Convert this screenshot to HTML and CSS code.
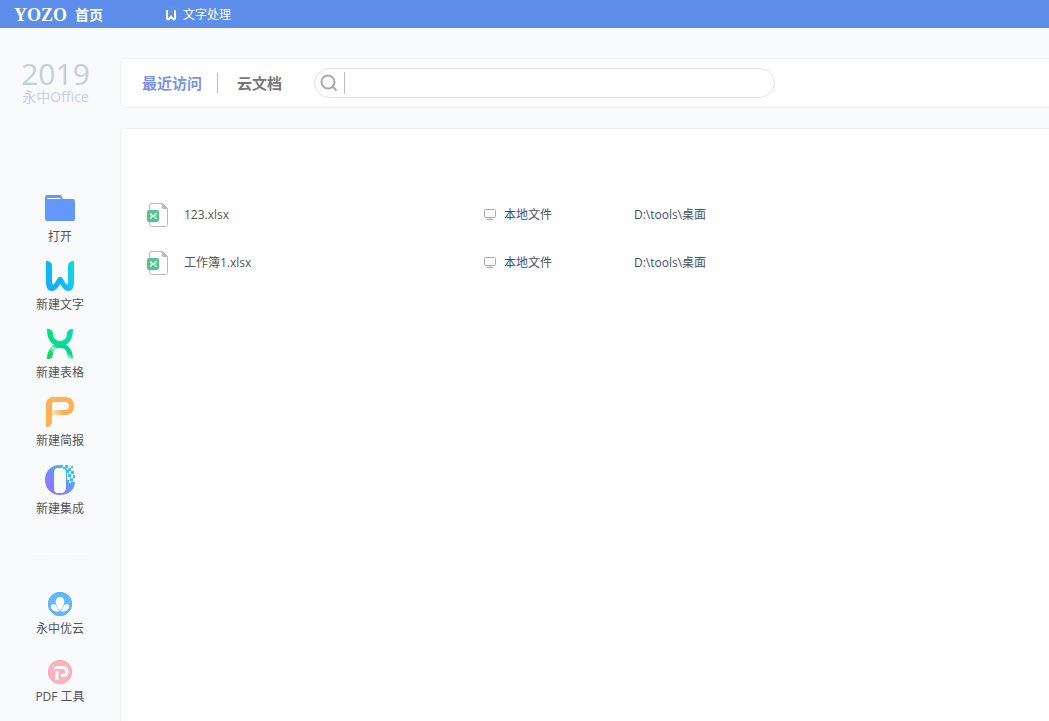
FILE: index.html
```html
<!DOCTYPE html>
<html lang="zh-CN">
<head>
<meta charset="utf-8">
<meta name="viewport" content="width=device-width, initial-scale=1">
<title>首页</title>
<link rel="stylesheet" href="styles.css">
</head>
<body>
<svg class="defs" width="0" height="0" aria-hidden="true">
  <symbol id="sheet-file" viewBox="0 0 22 24">
    <path d="M4 .5h11.500l5 5v16a2 2 0 0 1-2 2H4.500a2 2 0 0 1-2-2v-19a2 2 0 0 1 2-2z" fill="#fff" stroke="#b9babe"/>
    <path d="M15 0l6 6h-4.500a1.500 1.500 0 0 1-1.500-1.500z" fill="#b9babe"/>
    <rect y="7" width="12" height="12" rx="2" fill="#57c48f"/>
    <path d="M3.500 10c0 4 5.500 2 5.500 6M9 10c0 4-5.500 2-5.500 6" fill="none" stroke="#fff" stroke-width="1.300"/>
  </symbol>
  <symbol id="monitor" viewBox="0 0 12 12">
    <rect x=".5" y=".5" width="11" height="8" rx="1" fill="none" stroke="#a9a9a9"/>
    <path d="M6 8.500v2M3 10.500h6" fill="none" stroke="#a9a9a9"/>
  </symbol>
</svg>
<header class="titlebar">
  <button class="home-tab"><span class="brand">YOZO</span><span>首页</span></button>
  <button class="doc-tab">
    <svg width="16" height="16" viewBox="0 0 16 16" aria-hidden="true"><rect width="16" height="16" rx="2" fill="#5b93e2"/><path d="M4 3v8.500a1.200 1.200 0 0 0 2 .5l2-2.500 2 2.500a1.200 1.200 0 0 0 2-.5V3" fill="none" stroke="#fff" stroke-width="2"/></svg>
    <span>文字处理</span>
  </button>
</header>
<div class="layout">
  <aside class="sidebar">
    <div class="product"><span class="year">2019</span><span class="edition">永中Office</span></div>
    <nav class="actions">
      <button class="action">
        <svg width="32" height="32" viewBox="0 0 32 32" aria-hidden="true"><path d="M3 3h14l2 4h10a2 2 0 0 1 2 2v18a2 2 0 0 1-2 2H3a2 2 0 0 1-2-2V5a2 2 0 0 1 2-2z" fill="#6497fc"/><path d="M3 6.500h14" stroke="#fff"/></svg>
        <span>打开</span>
      </button>
      <button class="action">
        <svg width="32" height="32" viewBox="0 0 32 32" aria-hidden="true">
          <defs><linearGradient id="w-left" x1="0" y1="0" x2="0" y2="1"><stop stop-color="#0bbcf0"/><stop offset="1" stop-color="#11b0fa"/></linearGradient><linearGradient id="w-right" x1="0" y1="1" x2="1" y2="0"><stop stop-color="#12a8e8"/><stop offset=".5" stop-color="#16c7f0"/><stop offset="1" stop-color="#00e4d4"/></linearGradient></defs>
          <path d="M24 7c0-4 2-6 6-6v21c0 6-2 9-6 9-3 0-5-3-8-7l-3-4c2-4 4-4 6-1l3 5c1 1 2 0 2-2z" fill="url(#w-right)"/>
          <path d="M2 1c4 0 6 2 6 5v16c0 2 1 3 2 2l4-6c1-1 3-1 5 1-3 5-6 12-11 12-4 0-6-3-6-9z" fill="url(#w-left)"/>
        </svg>
        <span>新建文字</span>
      </button>
      <button class="action">
        <svg width="32" height="32" viewBox="0 0 32 32" aria-hidden="true">
          <defs><linearGradient id="x-top" x1="0" y1="0" x2="1" y2="0"><stop stop-color="#00de80"/><stop offset="1" stop-color="#00dfb0"/></linearGradient><linearGradient id="x-bottom" x1="0" y1="1" x2="1" y2="0"><stop stop-color="#08cf45"/><stop offset=".3" stop-color="#22db72"/><stop offset=".45" stop-color="#9af3c5"/><stop offset=".6" stop-color="#08d58d"/><stop offset="1" stop-color="#00d391"/></linearGradient></defs>
          <path d="M3 31c0-9 5-16 13-16s13 7 13 16c-4 0-6-2-6-5 0-4-3-6-7-6s-7 2-7 6c0 3-2 5-6 5z" fill="url(#x-bottom)"/>
          <path d="M3 1c4 0 6 2 6 5 0 4 3 7 7 7s7-3 7-7c0-3 2-5 6-5 0 10-4 17-13 17S3 11 3 1z" fill="url(#x-top)"/>
        </svg>
        <span>新建表格</span>
      </button>
      <button class="action">
        <svg width="32" height="32" viewBox="0 0 32 32" aria-hidden="true">
          <defs><linearGradient id="p-tail" x1="0" y1="0" x2="1" y2="0"><stop stop-color="#ffe3bd"/><stop offset=".7" stop-color="#ffb65c"/></linearGradient></defs>
          <path d="M8 14h14v5H8z" fill="url(#p-tail)"/>
          <path d="M2 31V9c0-5 3-8 8-8h11c6 0 9 4 9 9s-3 9-9 9h-4l2-5h2c2 0 4-1 4-4s-2-4-4-4H10c-2 0-2 1-2 3v16c0 4-2 6-6 6z" fill="#feb053"/>
        </svg>
        <span>新建简报</span>
      </button>
      <button class="action">
        <svg width="32" height="32" viewBox="0 0 32 32" aria-hidden="true">
          <defs><linearGradient id="o-ring" x1="0" y1="1" x2="1" y2="0"><stop stop-color="#a26aff"/><stop offset=".45" stop-color="#728aff"/><stop offset="1" stop-color="#31c8f5"/></linearGradient></defs>
          <path d="M14 1C6 2 1 8 1 16s6 15 15 15 15-6 15-13l-5-1-3-3V5l-3-1zM14 4h4c3 0 4 2 4 5v14c0 4-2 6-5 6h-3c-3 0-4-2-4-5V9c0-3 1-5 4-5z" fill-rule="evenodd" fill="url(#o-ring)"/>
          <path d="M15 1h4v2h-4zM21 1h3v3h-3zM19 3h3v2h-3zM24 4h3v3h-3zM27 2h2v2h-2zM22 6h3v3h-3zM27 7h3v3h-3zM24 10h3v3h-3zM29 11h2v3h-2zM26 14h3v3h-3z" fill="#2fcaf3"/>
          <path d="M23 14h2v2h-2zM25 17h2v2h-2z" fill="#f9fafc"/>
        </svg>
        <span>新建集成</span>
      </button>
    </nav>
    <hr class="divider">
    <nav class="services">
      <button class="action">
        <svg width="24" height="24" viewBox="0 0 24 24" aria-hidden="true"><circle cx="12" cy="12" r="12" fill="#64baf9"/><circle cx="12" cy="12" r="11.500" fill="none" stroke="#5ab0f0"/><path d="M12 19C9 15 7 11 8 8c1-4 7-4 8 0 1 3-1 7-4 11z" fill="#fff"/><path d="M11 19.500c-5 0-8-2-8-5 0-2 2-3 4-2 2 2 3 4 4 7zM13 19.500c5 0 8-2 8-5 0-2-2-3-4-2-2 2-3 4-4 7z" fill="#fff"/></svg>
        <span>永中优云</span>
      </button>
      <button class="action">
        <svg width="24" height="24" viewBox="0 0 24 24" aria-hidden="true"><circle cx="12" cy="12" r="12" fill="#ffb3bd"/><circle cx="12" cy="12" r="11.500" fill="none" stroke="#f8a9b5"/><path d="M9 20v-9M8 7.500h7a4 4 0 0 1 0 8h-2" fill="none" stroke="#fff" stroke-width="3"/><path d="M4 5h2v1H4zM6 7h2v2H6z" fill="#fff"/></svg>
        <span>PDF 工具</span>
      </button>
    </nav>
  </aside>
  <main class="content">
    <section class="toolbar">
      <button class="view-tab current">最近访问</button>
      <button class="view-tab">云文档</button>
      <label class="search">
        <svg width="18" height="18" viewBox="0 0 18 18" aria-hidden="true"><circle cx="8" cy="8" r="6.500" fill="none" stroke="#aaa" stroke-width="2"/><path d="M12.500 12.500l4 4" stroke="#aaa" stroke-width="2"/></svg>
        <input class="search-box" type="text" aria-label="搜索">
      </label>
    </section>
    <section class="files">
      <table class="file-table">
        <tbody>
          <tr>
            <td class="name"><div class="cell"><svg width="22" height="24" aria-hidden="true"><use href="#sheet-file"/></svg><span>123.xlsx</span></div></td>
            <td class="source"><div class="cell near"><svg width="12" height="12" aria-hidden="true"><use href="#monitor"/></svg><span>本地文件</span></div></td>
            <td>D:\tools\桌面</td>
          </tr>
          <tr>
            <td class="name"><div class="cell"><svg width="22" height="24" aria-hidden="true"><use href="#sheet-file"/></svg><span>工作簿1.xlsx</span></div></td>
            <td class="source"><div class="cell near"><svg width="12" height="12" aria-hidden="true"><use href="#monitor"/></svg><span>本地文件</span></div></td>
            <td>D:\tools\桌面</td>
          </tr>
        </tbody>
      </table>
    </section>
  </main>
</div>
</body>
</html>
```
FILE: styles.css
```css
* {
  box-sizing: border-box;
}

body {
  margin: 0;
  min-height: 100vh;
  display: flex;
  flex-direction: column;
  background: #f9fafc;
  color: #555;
  font: 12px/16px "Open Sans", "Noto Sans CJK SC", sans-serif;
}

button {
  padding: 0;
  border: 0;
  background: none;
  color: inherit;
  font: inherit;
  cursor: pointer;
}

svg {
  display: block;
  flex: none;
}

.defs {
  position: absolute;
}

.titlebar {
  display: flex;
  height: 28px;
  padding: 1px 0 0 14px;
  background: #5c8de8;
  color: #fff;
}

.home-tab {
  display: flex;
  align-items: center;
  gap: 8px;
  width: 149px;
  font-size: 14px;
  font-weight: 700;
}

.brand {
  font-family: "Liberation Serif", serif;
  font-size: 18px;
}

.doc-tab {
  display: flex;
  align-items: center;
  gap: 4px;
}

.layout {
  flex: 1;
  display: flex;
}

.sidebar {
  flex: none;
  width: 120px;
  padding-top: 30px;
  display: flex;
  flex-direction: column;
}

.product {
  display: flex;
  flex-direction: column;
  align-items: center;
  height: 134px;
  padding-right: 9px;
  color: #c5cedd;
}

.year {
  font-size: 30px;
  line-height: 32px;
}

.edition {
  font-size: 14px;
  line-height: 14px;
}

.actions,
.services {
  display: flex;
  flex-direction: column;
  gap: 15px;
}

.services {
  gap: 23px;
  padding-bottom: 15px;
}

.action {
  display: flex;
  flex-direction: column;
  align-items: center;
  gap: 5px;
}

.divider {
  width: 72px;
  height: 2px;
  margin: 36px auto 37px;
  border: 0;
  background: linear-gradient(90deg, #f9fafc, #fff, #f9fafc);
}

.content {
  flex: 1;
  min-width: 0;
  padding-top: 30px;
  display: flex;
  flex-direction: column;
  gap: 20px;
}

.toolbar,
.files {
  border: 1px solid #eee;
  border-right: 0;
  border-radius: 5px 0 0 5px;
  background: #fff;
}

.toolbar {
  display: flex;
  align-items: center;
  height: 50px;
  padding-left: 21px;
}

.view-tab {
  color: #777;
  font-size: 15px;
  line-height: 20px;
  font-weight: 700;
}

.current {
  margin-right: 19px;
  padding-right: 15px;
  border-right: 1px solid #b9bcc2;
  color: #7b93e6;
}

.search {
  display: flex;
  align-items: center;
  gap: 6px;
  flex: 0 1 461px;
  height: 30px;
  margin-left: 32px;
  padding: 0 16px 0 5px;
  border: 1px solid #e2e2e4;
  border-radius: 15px;
}

.search-box {
  flex: 1;
  min-width: 0;
  height: 22px;
  padding: 0 8px;
  border: 0;
  border-left: 1px solid #b9bcc2;
  outline: 0;
  background: none;
  color: #555;
  font: inherit;
}

.files {
  flex: 1;
  padding: 62px 0 0 26px;
  border-bottom: 0;
  border-bottom-left-radius: 0;
}

.file-table {
  width: 100%;
  table-layout: fixed;
  border-collapse: collapse;
}

.file-table td {
  height: 48px;
  padding: 0;
  color: #465066;
}

.file-table .name {
  width: 337px;
  color: #555;
}

.file-table .source {
  width: 150px;
}

.cell {
  display: flex;
  align-items: center;
  gap: 15px;
}

.near {
  gap: 8px;
}
```
